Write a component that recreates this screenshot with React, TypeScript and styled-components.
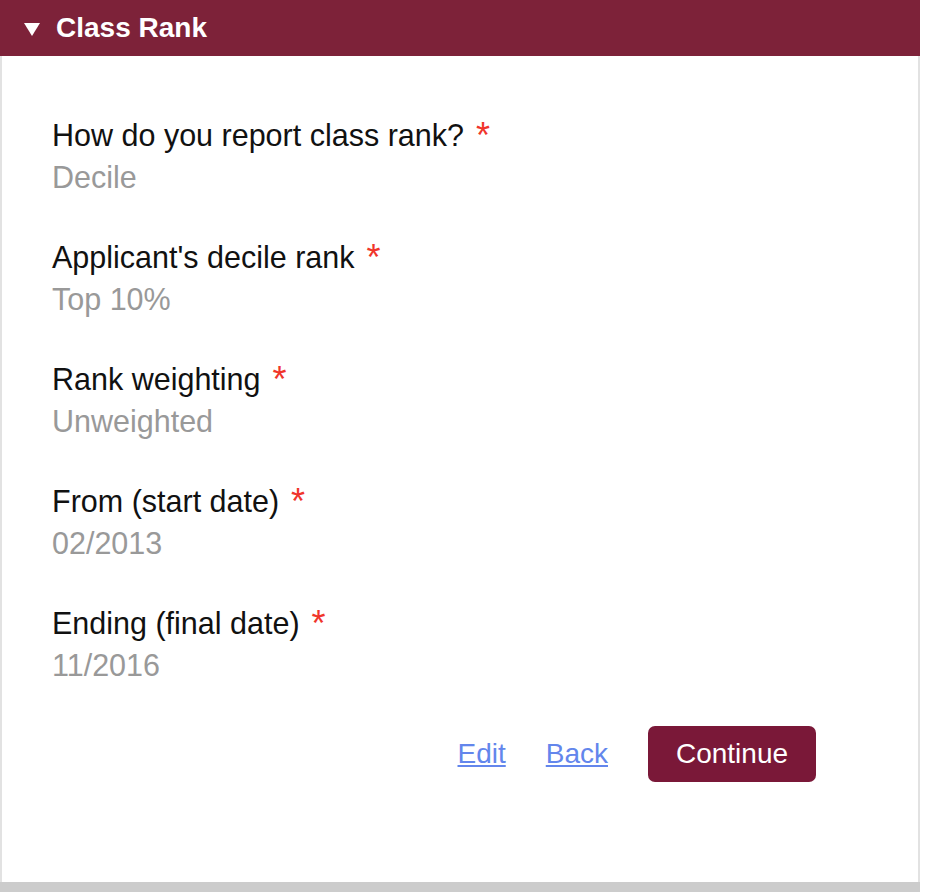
import React from "react";
import styled, { createGlobalStyle } from "styled-components";

const Global = createGlobalStyle`
  html, body { margin: 0; padding: 0; background: #fff; }
  body { font-family: "Liberation Sans", Arial, sans-serif; }
`;

const Panel = styled.section`
  width: 920px;
  border-bottom: 10px solid #cccccc;
`;

const Header = styled.div`
  height: 56px;
  background: #7d2239;
  display: flex;
  align-items: center;
  padding-left: 24px;
  gap: 16px;
  color: #fff;
  font-weight: bold;
  font-size: 28px;
  box-sizing: border-box;
`;

const Triangle = styled.span`
  width: 0;
  height: 0;
  margin-top: 2px;
  border-left: 8px solid transparent;
  border-right: 8px solid transparent;
  border-top: 13px solid #fff;
`;

const Body = styled.div`
  border-left: 2px solid #e2e2e2;
  border-right: 2px solid #e2e2e2;
  padding: 58px 0 0 50px;
  height: 826px;
  box-sizing: border-box;
  display: flex;
  flex-direction: column;
  gap: 38px;
`;

const Field = styled.div``;

const Label = styled.div`
  font-size: 30.5px;
  color: #111;
  line-height: 42px;
`;

const Star = styled.span`
  color: #f0352b;
  margin-left: 12px;
  font-size: 36px;
  line-height: 0;
  position: relative;
  top: 2px;
`;

const Value = styled.div`
  font-size: 30.5px;
  color: #999;
  line-height: 42px;
`;

const Actions = styled.div`
  display: flex;
  justify-content: flex-end;
  align-items: center;
  gap: 40px;
  padding-right: 102px;
  margin-top: 2px;
`;

const LinkText = styled.a`
  font-size: 28px;
  color: #6386ec;
  text-decoration: underline;
  cursor: pointer;
`;

const Button = styled.button`
  background: #7a1838;
  color: #fff;
  border: none;
  border-radius: 7px;
  width: 168px;
  height: 56px;
  font-size: 28px;
  font-family: inherit;
`;

const fields = [
  ["How do you report class rank?", "Decile"],
  ["Applicant's decile rank", "Top 10%"],
  ["Rank weighting", "Unweighted"],
  ["From (start date)", "02/2013"],
  ["Ending (final date)", "11/2016"],
];

export default function App() {
  return (
    <>
      <Global />
      <Panel>
        <Header>
          <Triangle />
          <span>Class Rank</span>
        </Header>
        <Body>
          {fields.map(([l, v]) => (
            <Field key={l}>
              <Label>
                {l}
                <Star>*</Star>
              </Label>
              <Value>{v}</Value>
            </Field>
          ))}
          <Actions>
            <LinkText>Edit</LinkText>
            <LinkText>Back</LinkText>
            <Button>Continue</Button>
          </Actions>
        </Body>
      </Panel>
    </>
  );
}
